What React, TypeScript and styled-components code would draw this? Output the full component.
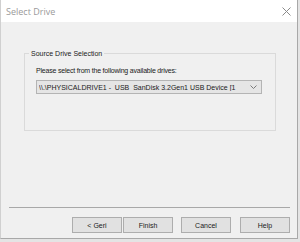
import styled, { createGlobalStyle } from "styled-components";

const GlobalStyle = createGlobalStyle`
  html, body {
    margin: 0;
    padding: 0;
    background: #e4e4e4;
  }
  body {
    width: 300px;
    height: 242px;
    overflow: hidden;
    font-family: "Liberation Sans", Arial, sans-serif;
  }
`;

const Window = styled.div`
  width: 298px;
  height: 239px;
  display: flex;
  flex-direction: column;
  background: #f0f0f0;
  border-right: 1px solid #a8a8a8;
  border-bottom: 1px solid #a8a8a8;
  border-left: 1px solid #d0d0d0;
  box-sizing: border-box;
`;

const TitleBar = styled.div`
  height: 22px;
  flex: none;
  display: flex;
  align-items: center;
  justify-content: space-between;
  background: #ffffff;
  padding: 0 6px 0 5px;
`;

const Title = styled.span`
  font-family: "Open Sans", "Noto Sans", sans-serif;
  font-size: 9px;
  color: #9a9a9a;
`;

const Body = styled.div`
  flex: 1;
  display: flex;
  flex-direction: column;
  padding: 28px 7px 5px 7px;
`;

const Group = styled.fieldset`
  margin: 0 14px 0 16px;
  padding: 10px 13px 36px 11px;
  border: 1px solid #dadada;
  min-width: 0;
`;

const Legend = styled.legend`
  padding: 0 2px;
  margin-left: -7px;
  font-size: 7px;
  color: #1a1a1a;
`;

const Prompt = styled.div`
  font-size: 7px;
  letter-spacing: -0.2px;
  color: #1a1a1a;
  margin-bottom: 6px;
`;

const Combo = styled.div`
  height: 14px;
  display: flex;
  align-items: center;
  gap: 3px;
  padding: 0 4px 0 2px;
  background: #e5e5e5;
  border: 1px solid #b4b4b4;
  box-sizing: border-box;
`;

const ComboText = styled.span`
  flex: 1;
  overflow: hidden;
  white-space: pre;
  font-size: 7px;
  color: #1a1a1a;
`;

const Spacer = styled.div`
  flex: 1;
`;

const Separator = styled.div`
  height: 1px;
  background: #a8a8a8;
  margin: 0 0 9px 1px;
`;

const ButtonRow = styled.div`
  display: flex;
  justify-content: flex-end;
`;

const Button = styled.button<{ $gapLeft?: number }>`
  width: 50px;
  height: 16px;
  padding: 0;
  margin-left: ${p => p.$gapLeft ?? 0}px;
  background: #e1e1e1;
  border: 1px solid #adadad;
  font-family: "Liberation Sans", Arial, sans-serif;
  font-size: 7px;
  color: #1a1a1a;
`;

const CloseIcon = () => (
  <svg width="9" height="9" viewBox="0 0 9 9">
    <path d="M0.5 0.5 L8.5 8.5 M8.5 0.5 L0.5 8.5" stroke="#8a8a8a" strokeWidth="1" fill="none" />
  </svg>
);

const Chevron = () => (
  <svg width="7" height="4" viewBox="0 0 7 4">
    <path d="M0.5 0.5 L3.5 3.5 L6.5 0.5" stroke="#7a7a7a" strokeWidth="1" fill="none" />
  </svg>
);

export default function App() {
  return (
    <>
      <GlobalStyle />
      <Window>
        <TitleBar>
          <Title>Select Drive</Title>
          <CloseIcon />
        </TitleBar>
        <Body>
          <Group>
            <Legend>Source Drive Selection</Legend>
            <Prompt>Please select from the following available drives:</Prompt>
            <Combo>
              <ComboText>{"\\\\.\\PHYSICALDRIVE1 -  USB  SanDisk 3.2Gen1 USB Device [1"}</ComboText>
              <Chevron />
            </Combo>
          </Group>
          <Spacer />
          <Separator />
          <ButtonRow>
            <Button>&lt; Geri</Button>
            <Button $gapLeft={1}>Finish</Button>
            <Button $gapLeft={8}>Cancel</Button>
            <Button $gapLeft={9}>Help</Button>
          </ButtonRow>
        </Body>
      </Window>
    </>
  );
}
